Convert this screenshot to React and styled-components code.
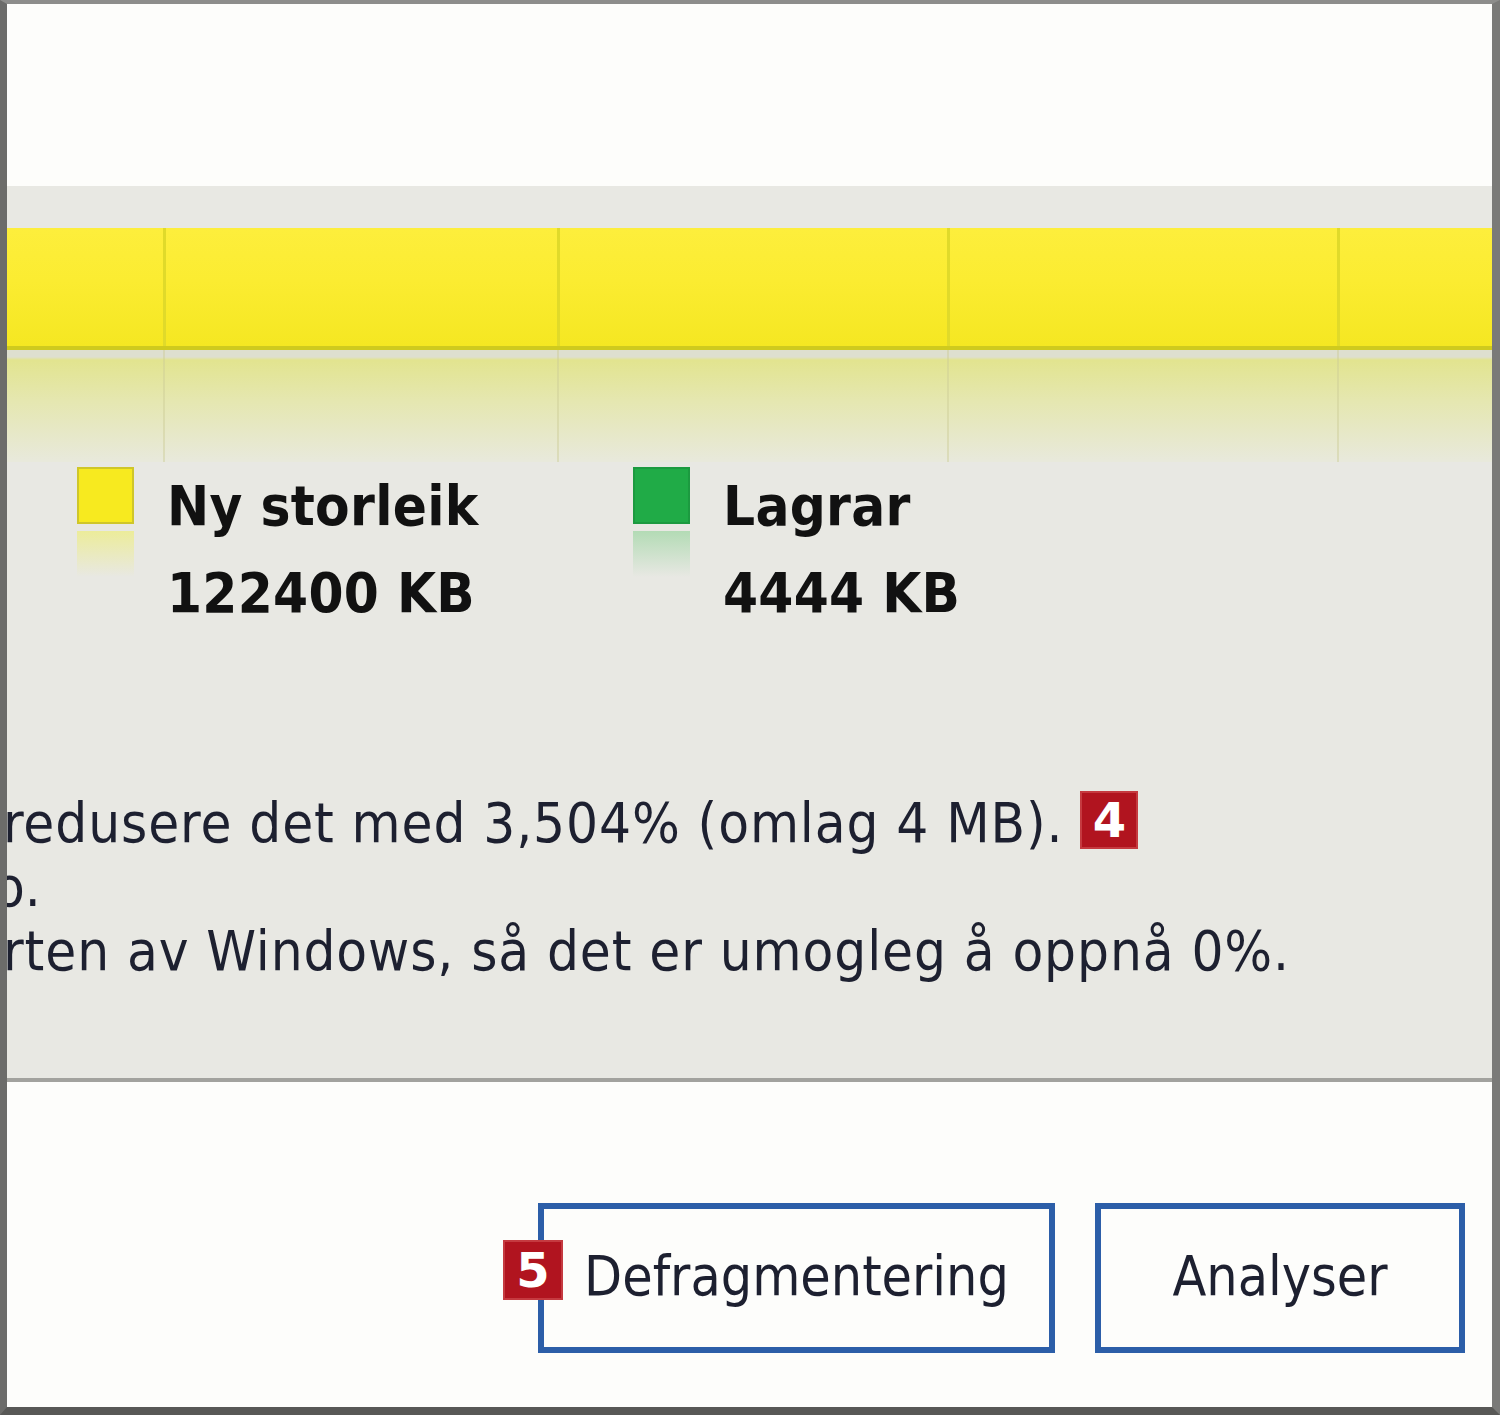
import React from 'react';
import styled, { createGlobalStyle } from 'styled-components';

const GlobalStyle = createGlobalStyle`
  html, body {
    margin: 0;
    padding: 0;
    background: #ffffff;
  }
  body {
    font-family: "DejaVu Sans Condensed", "DejaVu Sans", "Liberation Sans", sans-serif;
    font-stretch: condensed;
  }
`;

// bar segments, widths in px (last one takes what is left)
const segments = [156, 394, 390, 390, null];

const legend = [
  { color: '#f7ea1f', edge: '#cfc62a', glow: '#ecec9a', label: 'Ny storleik', value: '122400 KB' },
  { color: '#20ab47', edge: '#1c9a40', glow: '#b3dbb5', label: 'Lagrar', value: '4444 KB' },
];

const App = () => {
  return (
    <>
      <GlobalStyle />
      <Frame>
        <TopArea />
        <Panel>
          <Bar>
            {segments.map((w, i) => (
              <Segment key={i} $width={w} $first={i === 0} />
            ))}
          </Bar>
          <Reflection>
            {segments.map((w, i) => (
              <ReflectionCell key={i} $width={w} $first={i === 0} />
            ))}
          </Reflection>
          <Legend>
            {legend.map((item) => (
              <LegendItem key={item.label}>
                <Swatch>
                  <SwatchBox $color={item.color} $edge={item.edge} />
                  <SwatchGlow $glow={item.glow} />
                </Swatch>
                <LegendText>
                  <div>{item.label}</div>
                  <div>{item.value}</div>
                </LegendText>
              </LegendItem>
            ))}
          </Legend>
          <Message>
            <Line $shift={-4}>
              redusere det med 3,504% (omlag 4 MB).
              <Marker $inline>4</Marker>
            </Line>
            <Line $shift={-13}>o.</Line>
            <Line $shift={-4}>rten av Windows, så det er umogleg å oppnå 0%.</Line>
          </Message>
        </Panel>
        <Footer>
          <Button $width={517}>
            <Marker>5</Marker>
            Defragmentering
          </Button>
          <Button $width={370}>Analyser</Button>
        </Footer>
      </Frame>
    </>
  );
};

export default App;

const Frame = styled.div`
  box-sizing: border-box;
  width: 1500px;
  height: 1415px;
  display: flex;
  flex-direction: column;
  overflow: hidden;
  border-top: 4px solid #8d8d8b;
  border-left: 7px solid #6c6c6a;
  border-right: 8px solid #7a7a78;
  border-bottom: 8px solid #585856;
  background: #fdfdfb;
`;

const TopArea = styled.div`
  height: 182px;
  flex-shrink: 0;
  background: #fdfdfb;
`;

const Panel = styled.div`
  box-sizing: border-box;
  height: 896px;
  flex-shrink: 0;
  display: flex;
  flex-direction: column;
  padding-top: 42px;
  background: #e8e8e3;
  border-bottom: 4px solid #a2a29e;
`;

const Bar = styled.div`
  display: flex;
  height: 122px;
  box-sizing: border-box;
  border-bottom: 4px solid #cfca1e;
  background: linear-gradient(#fdee3c 0%, #fbec31 45%, #f5e722 100%);
`;

const Segment = styled.div`
  box-sizing: border-box;
  ${(p) => (p.$width ? `width: ${p.$width}px;` : 'flex: 1;')}
  border-left: ${(p) => (p.$first ? 'none' : '3px solid #e0da2a')};
`;

const Reflection = styled.div`
  display: flex;
  height: 112px;
  background: linear-gradient(
    #dedfcf 0px,
    #dedfcf 7px,
    #e2e48f 10px,
    #e5e7b0 45%,
    #e8e9dc 100%
  );
`;

const ReflectionCell = styled.div`
  box-sizing: border-box;
  ${(p) => (p.$width ? `width: ${p.$width}px;` : 'flex: 1;')}
  border-left: ${(p) => (p.$first ? 'none' : '2px solid rgba(205, 205, 150, 0.45)')};
`;

const Legend = styled.div`
  display: flex;
  padding-left: 70px;
`;

const LegendItem = styled.div`
  display: flex;
  align-items: flex-start;
  gap: 33px;
  width: 556px;
  &:last-child {
    width: auto;
  }
`;

const Swatch = styled.div`
  display: flex;
  flex-direction: column;
  margin-top: 5px;
  width: 57px;
`;

const SwatchBox = styled.div`
  box-sizing: border-box;
  width: 57px;
  height: 57px;
  background: ${(p) => p.$color};
  border: 2px solid ${(p) => p.$edge};
`;

const SwatchGlow = styled.div`
  margin-top: 7px;
  height: 46px;
  background: linear-gradient(${(p) => p.$glow}, rgba(232, 232, 227, 0));
`;

const LegendText = styled.div`
  font-weight: bold;
  font-size: 56px;
  line-height: 87px;
  letter-spacing: 0.3px;
  color: #111111;
`;

const Message = styled.div`
  margin-top: 155px;
  font-size: 56px;
  line-height: 64px;
  letter-spacing: 0.9px;
  color: #1d2030;
  white-space: nowrap;
`;

const Line = styled.div`
  margin-left: ${(p) => p.$shift}px;
`;

const Marker = styled.span`
  display: inline-flex;
  align-items: center;
  justify-content: center;
  box-sizing: border-box;
  width: ${(p) => (p.$inline ? 58 : 60)}px;
  height: ${(p) => (p.$inline ? 58 : 60)}px;
  background: #b1141f;
  border: 2px solid #c53a40;
  color: #ffffff;
  font-family: "DejaVu Sans", "Liberation Sans", sans-serif;
  font-stretch: normal;
  font-weight: bold;
  font-size: 48px;
  line-height: 1;
  letter-spacing: 0;
  ${(p) =>
    p.$inline
      ? `
    vertical-align: top;
    margin-left: 17px;
  `
      : `
    position: absolute;
    left: -41px;
    top: 31px;
  `}
`;

const Footer = styled.div`
  flex: 1;
  display: flex;
  justify-content: flex-end;
  align-items: flex-start;
  gap: 40px;
  padding: 121px 27px 0 0;
  background: #fdfdfb;
`;

const Button = styled.div`
  position: relative;
  box-sizing: border-box;
  width: ${(p) => p.$width}px;
  height: 150px;
  display: flex;
  align-items: center;
  justify-content: center;
  border: 6px solid #2c5ea8;
  background: #fdfdfb;
  color: #1d2030;
  font-size: 55px;
  padding-bottom: 4px;
`;
